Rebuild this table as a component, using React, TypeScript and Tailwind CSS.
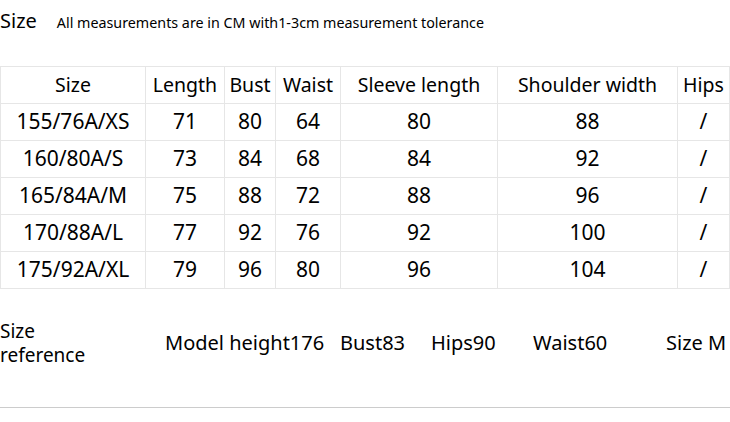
const rows = [
  ["155/76A/XS", "71", "80", "64", "80", "88", "/"],
  ["160/80A/S", "73", "84", "68", "84", "92", "/"],
  ["165/84A/M", "75", "88", "72", "88", "96", "/"],
  ["170/88A/L", "77", "92", "76", "92", "100", "/"],
  ["175/92A/XL", "79", "96", "80", "96", "104", "/"],
];

const headers = ["Size", "Length", "Bust", "Waist", "Sleeve length", "Shoulder width", "Hips"];
const widths = ["w-[145px]", "w-[79px]", "w-[51px]", "w-[65px]", "w-[157px]", "w-[180px]", "w-[52px]"];

export default function App() {
  return (
    <div className="w-[730px] h-[422px] bg-white text-black overflow-hidden font-['Noto_Sans','Open_Sans',sans-serif]">
      <div className="flex items-baseline h-[66px] pt-[6px]">
        <span className="text-[20px] leading-[30px]">Size</span>
        <span className="ml-[20px] text-[14.3px]">All measurements are in CM with1-3cm measurement tolerance</span>
      </div>

      <table className="border-collapse table-fixed w-[729px]">
        <colgroup>
          {widths.map((w, i) => (
            <col key={i} className={w} />
          ))}
        </colgroup>
        <thead>
          <tr className="h-[37px] text-[19.5px]">
            {headers.map((h) => (
              <th key={h} className="border border-[#e6e6e6] font-normal text-center p-0 whitespace-nowrap">
                {h}
              </th>
            ))}
          </tr>
        </thead>
        <tbody className="text-[21px]">
          {rows.map((r) => (
            <tr key={r[0]} className="h-[37px]">
              {r.map((c, i) => (
                <td key={i} className="border border-[#e6e6e6] text-center p-0 whitespace-nowrap">
                  {c}
                </td>
              ))}
            </tr>
          ))}
        </tbody>
      </table>

      <div className="flex items-center h-[108px] text-[20px] leading-[24px]">
        <div className="w-[165px] text-[19px]">
          Size
          <br />
          reference
        </div>
        <div className="w-[175px]">Model height176</div>
        <div className="w-[91px]">Bust83</div>
        <div className="w-[102px]">Hips90</div>
        <div className="w-[133px]">Waist60</div>
        <div className="whitespace-nowrap">Size M</div>
      </div>
      <div className="border-t border-[#cccccc] mt-[10px]" />
    </div>
  );
}
